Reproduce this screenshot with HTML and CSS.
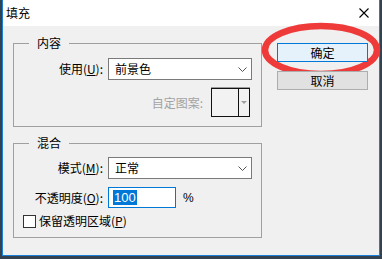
FILE: index.html
```html
<!DOCTYPE html>
<html lang="zh-CN">
<head>
    <meta charset="UTF-8">
    <title>填充</title>
    <link rel="stylesheet" href="styles.css">
</head>
<body>
    <div class="dialog">
        <div class="titlebar">
            <span class="title">填充</span>
            <svg class="close" width="10" height="10" viewBox="0 0 10 10">
                <path d="M0.5 0.5 L9.5 9.5 M9.5 0.5 L0.5 9.5" stroke="#000" stroke-width="1.1" fill="none"/>
            </svg>
        </div>
        <div class="content">
            <div class="groups">
                <fieldset class="group group-content">
                    <legend>内容</legend>
                    <div class="row">
                        <label class="label">使用(<u>U</u>):</label>
                        <div class="select">
                            <span>前景色</span>
                            <svg class="chevron" width="9" height="5" viewBox="0 0 9 5">
                                <path d="M0.5 0.5 L4.5 4.5 L8.5 0.5" stroke="#555" fill="none"/>
                            </svg>
                        </div>
                    </div>
                    <div class="row row-pattern">
                        <span class="label-disabled">自定图案:</span>
                        <div class="swatch">
                            <div class="swatch-main"></div>
                            <div class="swatch-arrow"><span class="tri"></span></div>
                        </div>
                    </div>
                </fieldset>
                <fieldset class="group group-blend">
                    <legend>混合</legend>
                    <div class="row">
                        <label class="label">模式(<u>M</u>):</label>
                        <div class="select">
                            <span>正常</span>
                            <svg class="chevron" width="9" height="5" viewBox="0 0 9 5">
                                <path d="M0.5 0.5 L4.5 4.5 L8.5 0.5" stroke="#555" fill="none"/>
                            </svg>
                        </div>
                    </div>
                    <div class="row row-opacity">
                        <label class="label">不透明度(<u>O</u>):</label>
                        <div class="input"><span class="selected">100</span></div>
                        <span class="unit">%</span>
                    </div>
                    <div class="row row-check">
                        <span class="checkbox"></span>
                        <span>保留透明区域(<u>P</u>)</span>
                    </div>
                </fieldset>
            </div>
            <div class="buttons">
                <button class="btn btn-default">确定</button>
                <button class="btn">取消</button>
            </div>
        </div>
    </div>
    <svg class="mark" width="382" height="259" viewBox="0 0 382 259">
        <ellipse cx="321" cy="50" rx="56" ry="24" fill="none" stroke="#ef3a3a" stroke-width="6.5"/>
    </svg>
</body>
</html>
```

FILE: styles.css
```css
body {
    margin: 0;
    background-color: #34414e;
    font-family: "Noto Sans CJK SC", "Noto Sans", sans-serif;
    font-size: 12px;
    color: #000;
}
.dialog {
    width: 376px;
    margin-left: 2px;
    border: 1px solid #1b7fd6;
    border-top: none;
    background-color: #f0f0f0;
}
.titlebar {
    height: 26px;
    padding-left: 3px;
    background-color: #fff;
    display: flex;
    align-items: center;
    justify-content: space-between;
    line-height: 16px;
}
.close {
    margin-right: 10px;
}
.content {
    height: 229px;
    box-sizing: border-box;
    padding: 9px 0 0 10px;
    display: flex;
}
.groups {
    width: 249px;
}
.group {
    margin: 0;
    padding: 7px 9px 9px;
    border: 1px solid #a0a0a0;
    box-sizing: border-box;
    width: 249px;
    min-width: 0;
}
.group legend {
    margin-left: 6px;
    padding: 0 8px;
    line-height: 16px;
}
.group-blend {
    margin-top: 8px;
    padding-top: 6px;
    padding-bottom: 8px;
}
.row {
    display: flex;
    align-items: center;
    line-height: 16px;
}
.label {
    width: 80px;
    margin-right: 5px;
    text-align: right;
    flex-shrink: 0;
}
.select {
    width: 144px;
    height: 22px;
    box-sizing: border-box;
    border: 1px solid #7a7a7a;
    background-color: #fff;
    padding-left: 6px;
    display: flex;
    align-items: center;
    justify-content: space-between;
}
.chevron {
    margin-right: 4px;
}
.row-pattern {
    margin-top: 8px;
    justify-content: flex-end;
}
.label-disabled {
    color: #a3a3a3;
    margin-right: 8px;
}
.swatch {
    width: 39px;
    height: 29px;
    box-sizing: border-box;
    border: 1px solid #111;
    box-shadow: 0 -1px 0 #9a9a9a;
    margin-right: 2px;
    display: flex;
    background-color: #f2f2f2;
}
.swatch-main {
    width: 26px;
    border-right: 1px solid #111;
}
.swatch-arrow {
    flex: 1;
    display: flex;
    justify-content: center;
    padding-top: 12px;
}
.tri {
    width: 0;
    height: 0;
    border-left: 3px solid transparent;
    border-right: 3px solid transparent;
    border-top: 3px solid #a0a0a0;
}
.row-opacity {
    margin-top: 8px;
}
.input {
    width: 68px;
    height: 21px;
    box-sizing: border-box;
    border: 1px solid #0078d7;
    background-color: #fff;
    padding-left: 4px;
    display: flex;
    align-items: center;
}
.selected {
    background-color: #0078d7;
    color: #fff;
    font-family: "Liberation Sans", Arial, sans-serif;
    font-size: 13px;
    line-height: 15px;
    padding: 0 1px;
}
.unit {
    margin-left: 7px;
    font-family: "Liberation Sans", Arial, sans-serif;
}
.row-check {
    margin-top: 5px;
}
.checkbox {
    width: 13px;
    height: 13px;
    box-sizing: border-box;
    border: 1px solid #333;
    background-color: #fff;
    margin-right: 3px;
}
.buttons {
    margin: 8px 0 0 15px;
    display: flex;
    flex-direction: column;
    gap: 9px;
}
.btn {
    position: relative;
    z-index: 2;
    width: 91px;
    height: 19px;
    box-sizing: border-box;
    border: 1px solid #adadad;
    background-color: #e1e1e1;
    font-family: inherit;
    font-size: 12px;
    line-height: 15px;
    padding: 0;
    color: #000;
}
.btn-default {
    border-color: #0078d7;
    background-color: #e5f1fb;
}
.mark {
    position: absolute;
    left: 0;
    top: 0;
    z-index: 1;
    pointer-events: none;
}
```
